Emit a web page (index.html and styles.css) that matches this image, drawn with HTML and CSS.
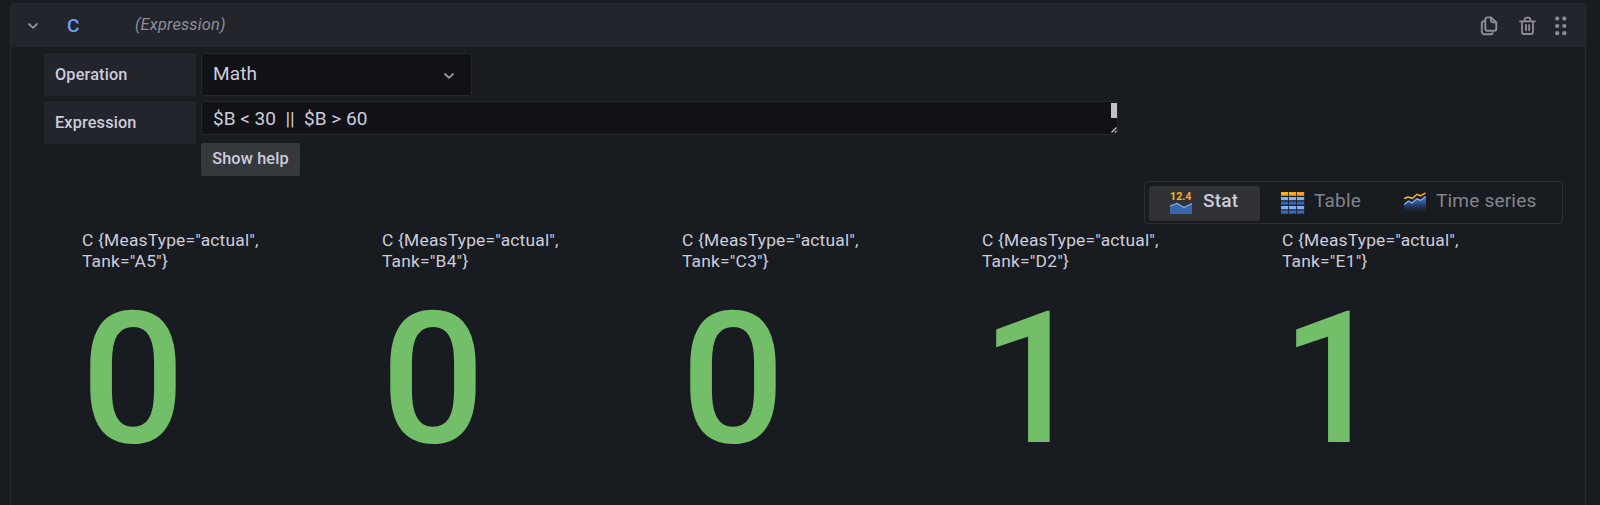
FILE: index.html
```html
<!DOCTYPE html>
<html lang="en">
<head>
<meta charset="utf-8">
<title>Expression query</title>
<link rel="stylesheet" href="styles.css">
</head>
<body>
<section class="query">
  <header class="query-header">
    <svg class="collapse" width="10" height="6" viewBox="0 0 10 6"><path d="M1 1l4 3.800L9 1" fill="none" stroke="currentColor" stroke-width="1.800" stroke-linecap="round" stroke-linejoin="round"/></svg>
    <span class="ref-id">C</span>
    <em class="source">(Expression)</em>
    <div class="actions">
      <svg width="18" height="20" viewBox="0 0 18 20" fill="none" stroke="currentColor" stroke-width="1.900" stroke-linejoin="round" stroke-linecap="round"><path d="M7.300 1.400h3.700l5.300 5v6.400a2 2 0 0 1-2 2H7.300a2 2 0 0 1-2-2V3.400a2 2 0 0 1 2-2zM11 1.800v3a1.500 1.500 0 0 0 1.500 1.500h3.500M4.500 5.300H3.500A1.700 1.700 0 0 0 1.800 7v8.700a2.500 2.500 0 0 0 2.500 2.500h6.700a2 2 0 0 0 1.700-1.200"/></svg>
      <svg class="trash" width="17" height="20" viewBox="0 0 17 20" fill="none" stroke="currentColor" stroke-width="1.800" stroke-linejoin="round" stroke-linecap="round"><path d="M1 5.300h15M3 5.300v10.700a2 2 0 0 0 2 2h7a2 2 0 0 0 2-2V5.300M5.700 5V3.300a1.700 1.700 0 0 1 1.700-1.700h2.200a1.700 1.700 0 0 1 1.700 1.700V5M7 9v5.300M10.200 9v5.300"/></svg>
      <svg class="grip" width="12" height="20" viewBox="0 0 12 20" fill="currentColor"><circle cx="2.200" cy="2.600" r="2.100"/><circle cx="9.300" cy="2.600" r="2.100"/><circle cx="2.200" cy="10" r="2.100"/><circle cx="9.300" cy="10" r="2.100"/><circle cx="2.200" cy="17.200" r="2.100"/><circle cx="9.300" cy="17.200" r="2.100"/></svg>
    </div>
  </header>

  <div class="form">
    <div class="row">
      <label class="label">Operation</label>
      <div class="select"><span>Math</span>
        <svg width="10" height="6" viewBox="0 0 10 6"><path d="M1 1l4 3.800L9 1" fill="none" stroke="currentColor" stroke-width="1.800" stroke-linecap="round" stroke-linejoin="round"/></svg>
      </div>
    </div>
    <div class="row">
      <label class="label">Expression</label>
      <div class="field">
        <div class="textarea"><span>$B &lt; 30&nbsp; ||&nbsp; $B &gt; 60</span>
          <div class="rail"><i class="thumb"></i>
            <svg width="6" height="6" viewBox="0 0 6 6"><path d="M.5 5.500l5-5M3.800 5.500L5.500 4" stroke="#c4c4c4" stroke-width="1.300" fill="none"/></svg>
          </div>
        </div>
        <button class="help">Show help</button>
      </div>
    </div>
  </div>

  <nav class="tabs">
    <button class="tab active">
      <svg width="22" height="22" viewBox="0 0 22 22"><defs><linearGradient id="num" x1="0" x2="1"><stop stop-color="#f2cc0c"/><stop offset="1" stop-color="#ff9830"/></linearGradient></defs><text class="stat-num" x="0" y="8.300" textLength="21.500" lengthAdjust="spacingAndGlyphs" fill="url(#num)">12.4</text><path d="M0 14l7-2.500 7 4 8-4V22H0z" fill="#3865ab"/><path d="M0 14l7-2.500 7 4 8-4" fill="none" stroke="#84aff1" stroke-width="1.200"/></svg>
      <span>Stat</span>
    </button>
    <button class="tab table">
      <svg width="24" height="22" viewBox="0 0 24 22"><defs><linearGradient id="head" x1="0" x2="1"><stop stop-color="#f2b80c"/><stop offset="1" stop-color="#ff9830"/></linearGradient></defs><path d="M0 0h7.200v3.800H0zM8 0h7.200v3.800H8zM16 0h7.200v3.800H16z" fill="url(#head)"/><path d="M0 4.900h7.200v3.400H0zM8 4.900h7.200v3.400H8zM16 4.900h7.200v3.400H16zM0 13.900h7.200v3.300H0zM8 13.900h7.200v3.300H8zM16 13.900h7.200v3.300H16z" fill="#84aff1"/><path d="M0 9.400h7.200v3.400H0zM8 9.400h7.200v3.400H8zM16 9.400h7.200v3.400H16zM0 18.300h7.200v3.400H0zM8 18.300h7.200v3.400H8zM16 18.300h7.200v3.400H16z" fill="#3865ab"/></svg>
      <span>Table</span>
    </button>
    <button class="tab">
      <svg width="22" height="22" viewBox="0 0 22 22"><defs><linearGradient id="area" x1="0" x2="0" y1="0" y2="1"><stop stop-color="#4379d0"/><stop offset=".4" stop-color="#2d5492"/><stop offset="1" stop-color="#1b2738" stop-opacity=".2"/></linearGradient></defs><path d="M0 12.500l4-3.500 4 1.700 5-4 4 1.500 5-4V20.500H0z" fill="url(#area)"/><path d="M.3 12.500L4.500 9l3.500 1.800 5-4 3.500 1.700 5-4" fill="none" stroke="#84aff1" stroke-width="1.400"/><path d="M.3 6.500l3.700-1.500 4.500 1.300 4.500-4 3.500 1.500L21.500 1" fill="none" stroke="url(#num)" stroke-width="1.500"/></svg>
      <span>Time series</span>
    </button>
  </nav>

  <div class="stats">
    <div class="stat"><p>C {MeasType="actual",<br>Tank="A5"}</p><strong>0</strong></div>
    <div class="stat"><p>C {MeasType="actual",<br>Tank="B4"}</p><strong>0</strong></div>
    <div class="stat"><p>C {MeasType="actual",<br>Tank="C3"}</p><strong>0</strong></div>
    <div class="stat"><p>C {MeasType="actual",<br>Tank="D2"}</p><strong>1</strong></div>
    <div class="stat"><p>C {MeasType="actual",<br>Tank="E1"}</p><strong>1</strong></div>
  </div>
</section>
</body>
</html>
```
FILE: styles.css
```css
* { box-sizing: border-box; }
body {
  margin: 0;
  height: 505px;
  overflow: hidden;
  padding: 3px 14px 0 10px;
  background: #181b1f;
  color: #ccccdc;
  font-family: Roboto, sans-serif;
  font-size: 19px;
}
svg { display: block; flex: none; overflow: visible; }
button { border: 0; font: inherit; color: inherit; letter-spacing: inherit; white-space: nowrap; }
.query {
  height: 520px;
  border: 1px solid #292b30;
  border-radius: 3px;
}
.query-header {
  display: flex;
  align-items: center;
  height: 43px;
  padding: 0 18px 0 17px;
  background: #22252b;
  color: #8e8e99;
}
.collapse { margin-top: 1px; }
.ref-id { margin-left: 29px; width: 68px; color: #6e9fff; font-weight: 500; line-height: 41px; }
.source { font-size: 16.4px; letter-spacing: .17px; line-height: 40px; padding-bottom: 1px; }
.actions { display: flex; align-items: center; margin-left: auto; padding-top: 1px; }
.trash { margin-left: 21px; }
.grip { margin-left: 19px; }
.form { display: flex; flex-direction: column; gap: 5px; padding: 6px 0 0 33px; }
.row { display: flex; gap: 5px; align-items: flex-start; }
.label {
  width: 152px;
  height: 43px;
  padding-left: 11px;
  border-radius: 3px;
  background: #22252b;
  font-size: 16.3px;
  font-weight: 500;
  line-height: 43px;
  letter-spacing: .15px;
}
.select, .textarea {
  display: flex;
  justify-content: space-between;
  border: 1px solid #25272c;
  border-radius: 2px;
  background: #111217;
  padding-left: 11px;
  letter-spacing: .15px;
}
.select { width: 271px; height: 43px; padding-right: 17px; line-height: 39px; }
.select svg { margin-top: 19px; color: #9a9aa6; }
.field { display: flex; flex-direction: column; align-items: flex-start; gap: 8px; }
.textarea { width: 917px; height: 34px; line-height: 34px; font-size: 19px; letter-spacing: 0; }
.rail { display: flex; flex-direction: column; justify-content: space-between; align-items: flex-end; padding: 1px 0; }
.thumb { width: 6px; height: 15px; background: #c1c1c1; }
.help {
  width: 99px;
  height: 33px;
  padding: 0 0 2px;
  border-radius: 2px;
  background: #35383c;
  font-size: 16.3px;
  font-weight: 500;
  letter-spacing: .15px;
}
.tabs {
  display: flex;
  width: 419px;
  height: 43px;
  margin: 5px 22px 0 auto;
  padding: 4px;
  border: 1px solid #2c2e33;
  border-radius: 3px;
  letter-spacing: .2px;
}
.tab {
  display: flex;
  align-items: center;
  gap: 10px;
  height: 35px;
  padding: 0 21px;
  border-radius: 3px;
  background: none;
  color: #83848d;
}
.tab span { line-height: 30px; padding-bottom: 5px; }
.tab svg { margin-bottom: 1px; }
.active { width: 111px; gap: 11px; background: #303236; color: #ccccdc; font-weight: 500; }
.table { gap: 9px; padding-right: 22px; }
.stat-num { font: 700 11px Roboto, sans-serif; letter-spacing: 0; }
.stats { display: grid; grid-template-columns: repeat(5, 300px); padding: 6px 0 0 71px; }
.stat p { margin: 0; font-size: 17.4px; letter-spacing: .2px; line-height: 21px; }
.stat strong { display: block; margin: 1px 0 0 -1px; color: #73bf69; font-size: 183px; font-weight: 500; line-height: 214px; }
```
